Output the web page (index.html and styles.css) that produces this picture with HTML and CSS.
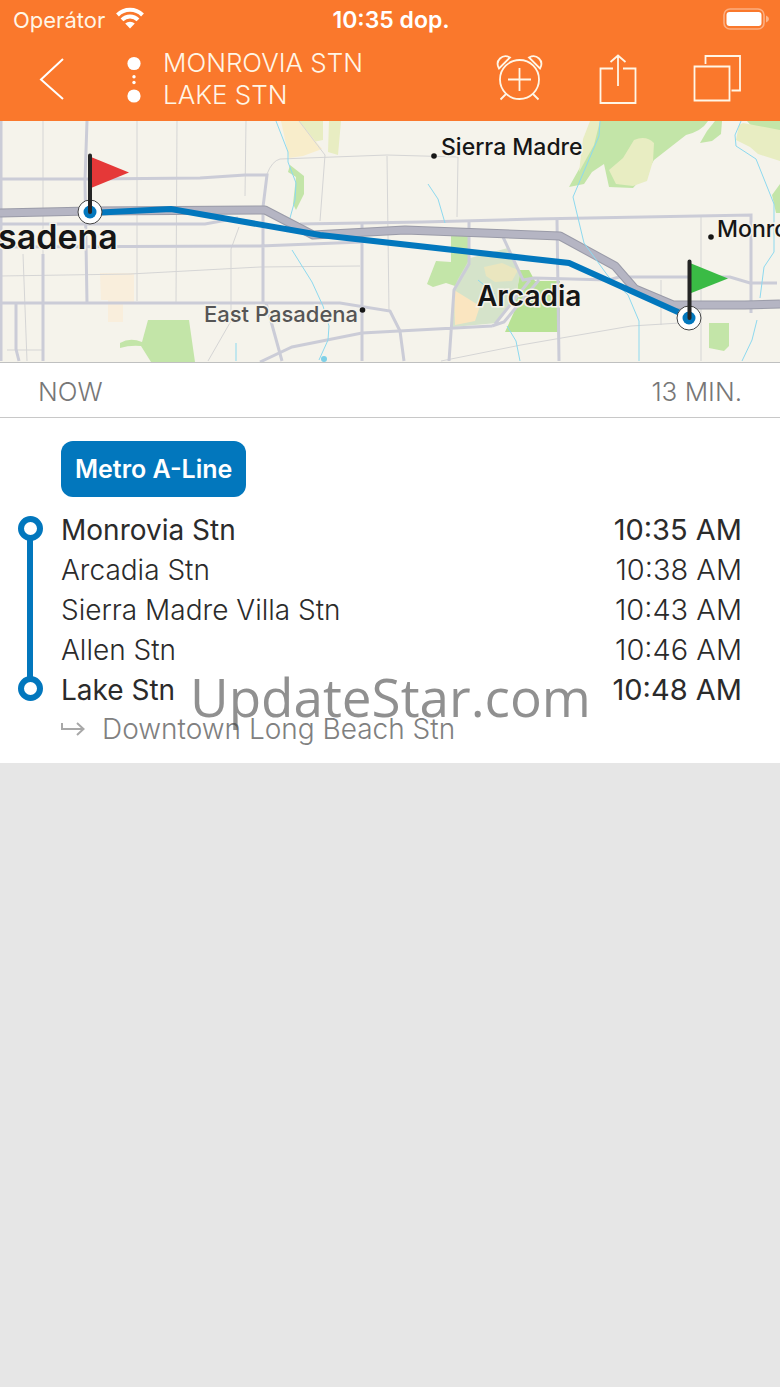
FILE: index.html
```html
<!DOCTYPE html>
<html lang="en">
<head>
<meta charset="utf-8">
<meta name="viewport" content="width=device-width, initial-scale=1">
<title>Monrovia Stn – Lake Stn</title>
<link rel="stylesheet" href="styles.css">
</head>
<body>
<header class="header">
  <div class="status">
    <div class="carrier">
      <span>Operátor</span>
      <svg class="wifi" width="28" height="22" viewBox="0 0 28 22" aria-hidden="true">
        <path d="M1.500 8a17.700 17.700 0 0 1 25 0M6 12.900a11.300 11.300 0 0 1 16 0" fill="none" stroke="#fff" stroke-width="4"/>
        <path d="M9.200 16.600a7 7 0 0 1 9.600 0L14 21.500z" fill="#fff"/>
      </svg>
    </div>
    <time class="clock">10:35 dop.</time>
    <svg class="battery" width="46" height="22" viewBox="0 0 46 22" aria-hidden="true">
      <rect x="1" y="1" width="40" height="20" rx="6" fill="none" stroke="#fff" stroke-opacity=".4" stroke-width="1.600"/>
      <rect x="3.500" y="4" width="35" height="14" rx="3" fill="#fff"/>
      <path d="M43 7.500q3 1.200 3 3.500t-3 3.500z" fill="#fff" fill-opacity=".45"/>
    </svg>
  </div>
  <nav class="nav">
    <button class="icon-button back" aria-label="Back">
      <svg width="26" height="44" viewBox="0 0 26 44"><path d="M24 2 2 22.500 24 42" fill="none" stroke="#fff" stroke-width="2"/></svg>
    </button>
    <svg class="route-dots" width="14" height="48" viewBox="0 0 14 48" fill="#fff" aria-hidden="true">
      <circle cx="7" cy="7.500" r="6.600"/><circle cx="7" cy="20.800" r="1.700"/><circle cx="7" cy="26.500" r="1.700"/><circle cx="7" cy="40" r="6.600"/>
    </svg>
    <h1 class="title">MONROVIA STN<br>LAKE STN</h1>
    <div class="actions">
      <button class="icon-button" aria-label="Add alert">
        <svg width="48" height="52" viewBox="0 0 48 52" fill="none" stroke="#fff6e6" stroke-width="1.800">
          <circle cx="24.500" cy="26.500" r="19.500"/><path d="M24.500 15v23M13 26.500h23M11.500 40.500l-6 6M37.500 40.500l6 6M4 15.500C-.5 7.500 7.500.5 15 4.500zM45 15.500C49.500 7.500 41.500.5 34 4.500z"/>
        </svg>
      </button>
      <button class="icon-button" aria-label="Share">
        <svg width="38" height="52" viewBox="0 0 38 52" fill="none" stroke="#fff6e6" stroke-width="1.800">
          <path d="M14 15.500H1.500V50h35V15.500H24M19 33V2.500M11.500 9 19 2.500 26.500 9"/>
        </svg>
      </button>
      <button class="icon-button" aria-label="Windows">
        <svg width="48" height="52" viewBox="0 0 48 52" fill="none" stroke="#fff6e6" stroke-width="1.800">
          <path d="M1.500 13.500h35v34h-35zM12.500 11V3h34.500v34.500H38.500"/>
        </svg>
      </button>
    </div>
  </nav>
</header>

<main>
  <svg class="map" viewBox="0 1 780 241" role="img" aria-label="Route map">
    <rect y="1" width="780" height="241" fill="#f5f3eb"/>
    <g fill="#c3e5a8">
      <path d="M148 200h41l6 42h-44l-10-16q-11-1-21 2v-5q10-6 22-1z"/>
      <path d="M290 45l14 11v18l-8 16-3-6 3-27-8-5z"/>
      <path d="M451 116h18v26l-14 24-9-3-13 4-6-3 9-23 15 1z"/>
      <path d="M600 1h108q-6 10-22 14l-32 25-7 12-14 16-24-1-5-23-12 8-8 12-15 3 14-25z"/>
      <path d="M715 1h7l-1 13-9 7-12 2 7-12z"/>
      <path d="M780 64l-8 11 4 18h4zM747 1h33v9h-25z"/>
      <path d="M709 203h20v23l-5 5-15-3z"/>
      <path d="M520 150h9l6 11h25v51h-55l9-20z" fill="#b8e295"/>
    </g>
    <g fill="#e8edc2">
      <path d="M590 1h10l-6 24-15 27 4-33z"/>
      <path d="M634 20q12-5 20 3l-1 18-6 20-14 5-17-2-7-14 14-12z"/>
      <path d="M743 3l37 7v31l-22-7-8-7-14-7 3-15zM329 1h12l-3 34-10-3z"/>
      <path d="M298 1h25v19l-10 2z"/>
    </g>
    <path d="M281 1h18l23 28-19 7-14 2z" fill="#f8edcb"/>
    <path d="M470 138l38-10 12 27-5 25-18 23-44 4-1-26 5-20z" fill="#d5e3ca"/>
    <path d="M454 170l26 16-5 15-20 4z" fill="#fae5c0"/>
    <path d="M484 147l18-4 16 7-6 11-17 1-9-6z" fill="#eae6bf"/>
    <path d="M100 153h34v29h-11v20h-15v-22h-7z" fill="#f9eedc"/>
    <g class="minor">
      <path d="M43 1v133M137 1v180M177 1l-1 181M246 1l-1 75M0 156l130-2 130-7 100-1M23 134l4 107M239 107l-8 22v72l-23 40M7 230h36"/>
      <path d="M267 54q5-13 13-15l107-4 71 2-1 60M299 1l26 34-5 66M387 36l2 156M701 97v144M661 160v45M441 241l80-16 110-19 49-3"/>
    </g>
    <path class="road" d="M0 59h90l110-1 45-3h22l-4 32v97M0 104h205l33-6M300 104l123-2 111-3 217-4v98M0 127l260-1 102-4"/>
    <path class="road" d="M0 183h340l50 8 10 20 4 30M1 1v240M87 1l-2 60 2 122M43 134v107M16 183v46l3 12M266 183l16 58M362 103v138"/>
    <path class="road" d="M469 102v42l-15 26-5 71M503 117l20 43 11-2 75 2 10-3h111l20 6h27M530 160l-35 44M539 160l-35 42-12 4M557 100l2 141M260 242l32-15 70-14 130-7"/>
    <path class="freeway-edge" d="M0 93l90-2 175-1 48 25 92-5 155 6 55 30 20 23 38 16h72l35-1"/>
    <path class="freeway" d="M0 93l90-2 175-1 48 25 92-5 155 6 55 30 20 23 38 16h72l35-1"/>
    <path class="water" d="M276 1l12 31v10l8 21-1 17-5 18M292 130l20 32 11 24 6 20-1 14-9 20M428 64l10 15 7 24M600 1l-1 15-26 61 11 46 24 33 20 19 11 26v40M741 1l-6 14 1 11 20 13 18 45v48l-10 15-4 31M757 200l-5 20-10 21M507 206l9 15 4 20M236 223v18M478 160l17 14"/>
    <circle cx="324" cy="239" r="3" fill="#7ed0e7"/>
    <path class="route" d="M90 93l81-4 149 26 249 28 120 54"/>
    <g class="stop">
      <circle cx="90" cy="92" r="12"/><circle class="stop-core" cx="90" cy="92" r="6.500"/>
      <circle cx="689" cy="198" r="12"/><circle class="stop-core" cx="689" cy="198" r="6.500"/>
    </g>
    <path d="M91 37l38 15.500L91 68z" fill="#e53838"/>
    <path d="M690 143l38 15.500-38 15z" fill="#3abb45"/>
    <path class="pole" d="M90 35.500V92M689.500 141.500V198"/>
    <g class="labels">
      <text class="city" x="-2" y="129">sadena</text>
      <text class="town" x="477" y="186">Arcadia</text>
      <text x="441" y="35">Sierra Madre</text>
      <text x="717" y="117">Monrovia</text>
      <text class="district" x="204" y="202">East Pasadena</text>
    </g>
    <g fill="#161616"><circle cx="434" cy="36" r="2.800"/><circle cx="711" cy="117" r="2.800"/><circle cx="362.500" cy="190" r="2.800"/></g>
  </svg>

  <section class="summary"><span>NOW</span><span>13 MIN.</span></section>

  <section class="trip">
    <div class="line-badge">Metro A-Line</div>
    <ol class="stops">
      <li class="stop-row end"><span>Monrovia Stn</span><time>10:35 AM</time></li>
      <li class="stop-row"><span>Arcadia Stn</span><time>10:38 AM</time></li>
      <li class="stop-row"><span>Sierra Madre Villa Stn</span><time>10:43 AM</time></li>
      <li class="stop-row"><span>Allen Stn</span><time>10:46 AM</time></li>
      <li class="stop-row end"><span>Lake Stn</span><time>10:48 AM</time></li>
    </ol>
    <div class="direction">
      <svg width="24" height="16" viewBox="0 0 24 16" fill="none" stroke="#a8a8a8" stroke-width="2" aria-hidden="true"><path d="M1 2v6h21M16 2l6.500 6-6.500 6"/></svg>
      <span>Downtown Long Beach Stn</span>
    </div>
    <div class="watermark">UpdateStar.com</div>
  </section>
</main>
</body>
</html>
```
FILE: styles.css
```css
*,
*::before {
  box-sizing: border-box;
}

body {
  margin: 0;
  min-height: 100vh;
  background: #e6e6e6;
  color: #2b2b2b;
  font-family: Inter, "Liberation Sans", sans-serif;
}

/* Header */
.header {
  background: #fa782c;
  color: #fff6e6;
}

.status {
  display: grid;
  grid-template-columns: 1fr auto 1fr;
  align-items: center;
  height: 40px;
  padding: 0 11px 0 13px;
  font-size: 22px;
}

.carrier {
  display: flex;
  align-items: center;
  gap: 11px;
}

.wifi {
  margin-bottom: 4px;
}

.clock {
  font-size: 23px;
  font-weight: 600;
  color: #fff;
}

.battery {
  justify-self: end;
  margin-bottom: 2px;
}

.nav {
  display: flex;
  align-items: flex-start;
  height: 81px;
  padding: 0 39px;
}

.icon-button {
  display: block;
  padding: 0;
  border: 0;
  background: none;
}

.icon-button svg {
  display: block;
}

.back {
  margin-top: 17px;
}

.route-dots {
  margin: 16px 0 0 62px;
}

.title {
  margin: 7px 0 0 22px;
  font-size: 26px;
  font-weight: 300;
  line-height: 32px;
  white-space: nowrap;
}

.actions {
  display: flex;
  gap: 56px;
  margin: 13px 0 0 auto;
}

/* Map */
.map {
  display: block;
  width: 100%;
  height: auto;
}

.minor {
  fill: none;
  stroke: #d5d5d5;
  stroke-width: 1;
}

.road {
  fill: none;
  stroke: #cbccd7;
  stroke-width: 3;
}

.freeway-edge {
  fill: none;
  stroke: #9a9ba8;
  stroke-width: 9;
  stroke-linejoin: round;
}

.freeway {
  fill: none;
  stroke: #b5b5c3;
  stroke-width: 7;
  stroke-linejoin: round;
}

.water {
  fill: none;
  stroke: #8dd9ef;
  stroke-width: 1;
}

.route {
  fill: none;
  stroke: #0277bd;
  stroke-width: 6;
}

.stop {
  fill: #fff;
  stroke: #444;
  stroke-width: 1;
}

.stop-core {
  fill: #0277bd;
  stroke: none;
}

.pole {
  stroke: #252525;
  stroke-width: 4;
  stroke-linecap: round;
}

.labels {
  fill: #161616;
  stroke: #f5f3eb;
  stroke-width: 3;
  paint-order: stroke;
  font-size: 23px;
  font-weight: 500;
}

.city {
  font-size: 34px;
  font-weight: 600;
}

.town {
  font-size: 28px;
  font-weight: 600;
}

.district {
  fill: #555;
  font-size: 22px;
}

/* Trip */
.summary {
  display: flex;
  align-items: center;
  justify-content: space-between;
  height: 56px;
  padding: 2px 38px 0;
  border-top: 1px solid #bfc0c0;
  border-bottom: 1px solid #c8c8c8;
  background: #fff;
  color: #777;
  font-size: 26px;
  font-weight: 300;
}

.trip {
  position: relative;
  padding: 23px 38px 15px 61px;
  background: #fff;
}

.line-badge {
  width: max-content;
  padding: 0 14px;
  border-radius: 12px;
  background: #0277bd;
  color: #fff;
  font-size: 25px;
  font-weight: 600;
  line-height: 56px;
}

.stops {
  position: relative;
  margin: 13px 0 0;
  padding: 0;
  list-style: none;
}

.stops::before {
  content: "";
  position: absolute;
  top: 20px;
  bottom: 20px;
  left: -34px;
  width: 6px;
  background: #0277bd;
}

.stop-row {
  position: relative;
  display: flex;
  justify-content: space-between;
  font-size: 28px;
  font-weight: 300;
  line-height: 40px;
}

.stop-row time {
  font-size: 29px;
}

.end {
  font-weight: 400;
}

.end::before {
  content: "";
  position: absolute;
  top: 6px;
  left: -43px;
  width: 25px;
  height: 25px;
  border: 6px solid #0277bd;
  border-radius: 50%;
  background: #fff;
}

.direction {
  display: flex;
  align-items: center;
  gap: 17px;
  color: #808080;
  font-size: 28px;
  font-weight: 300;
  line-height: 38px;
}

.watermark {
  position: absolute;
  bottom: 28px;
  left: 190px;
  color: rgb(70 70 70 / 60%);
  font-family: "Open Sans", "Noto Sans", sans-serif;
  font-size: 53px;
  line-height: 76px;
  pointer-events: none;
}
```
